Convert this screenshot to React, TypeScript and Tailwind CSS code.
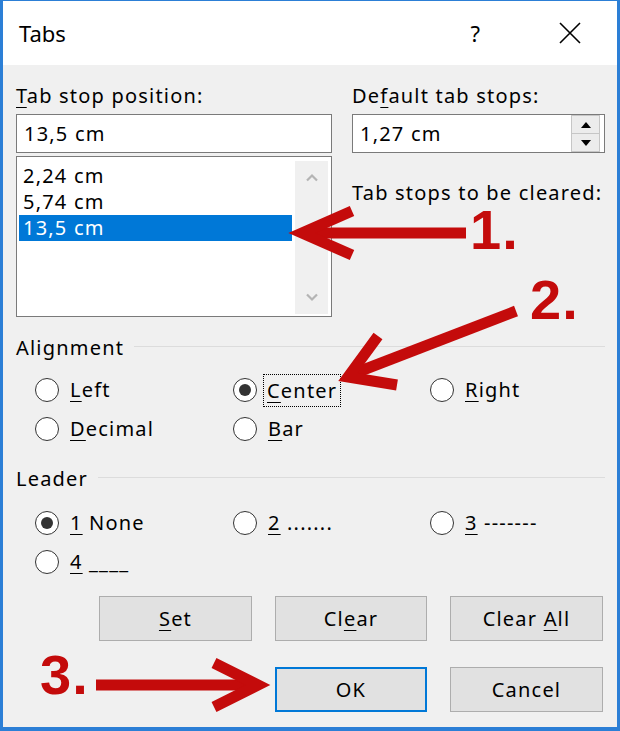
import React from 'react'

const U = ({ children }: { children: React.ReactNode }) => (
  <span className="underline decoration-1 underline-offset-[4px]">{children}</span>
)

const Radio = ({
  checked = false,
  focus = false,
  children,
}: {
  checked?: boolean
  focus?: boolean
  children: React.ReactNode
}) => (
  <div className="flex h-[26px] items-center gap-[11px]">
    <span className="flex h-6 w-6 shrink-0 items-center justify-center rounded-full border-[1.5px] border-[#333] bg-white">
      {checked && <span className="h-3 w-3 rounded-full bg-[#333]" />}
    </span>
    <span
      className={
        focus ? '-ml-[5px] block h-[33px] border border-dotted border-black px-[3px] pt-[3px]' : ''
      }
    >
      {children}
    </span>
  </div>
)

const Btn = ({ children, primary = false }: { children: React.ReactNode; primary?: boolean }) => (
  <button
    className={
      primary
        ? 'block h-[45px] w-full border-2 border-[#0078d7] bg-[#e1e1e1] text-center'
        : 'block h-[45px] w-full border border-[#adadad] bg-[#e1e1e1] text-center'
    }
  >
    {children}
  </button>
)

const GroupTitle = ({ children }: { children: React.ReactNode }) => (
  <div className="flex h-[26px] items-center gap-[10px]">
    <span>{children}</span>
    <span className="mt-[-3px] h-px flex-1 bg-[#dcdcdc]" />
  </div>
)

const Chevron = ({ up }: { up?: boolean }) => (
  <svg width="14" height="9" viewBox="0 0 14 9">
    <path
      d={up ? 'M2 7.5 L7 2.5 L12 7.5' : 'M2 1.5 L7 6.5 L12 1.5'}
      fill="none"
      stroke="#b4b4b4"
      strokeWidth="2.2"
    />
  </svg>
)

const Mark = ({ className, children }: { className: string; children: React.ReactNode }) => (
  <div
    className={`absolute text-[56px] font-bold leading-[40px] text-[#c40b0b] ${className}`}
    style={{ fontFamily: '"Liberation Sans", Arial, sans-serif' }}
  >
    {children}
  </div>
)

export default function App() {
  return (
    <div
      className="relative flex h-[731px] w-[620px] flex-col border-x-[3px] border-t border-b-4 border-[#2c7fd6] bg-[#f0f0f0] text-[20px] leading-[26px] tracking-[1.2px] text-black"
      style={{ fontFamily: '"Noto Sans", "Open Sans", sans-serif' }}
    >
      {/* title bar */}
      <div className="flex h-[64px] shrink-0 items-center bg-white pl-[16px] tracking-normal">
        <span className="text-[22px]">Tabs</span>
        <span className="ml-auto mr-[78px] text-[22px]">?</span>
        <svg width="24" height="24" viewBox="0 0 24 24" className="mr-[35px]">
          <path d="M2 2 L22 22 M22 2 L2 22" stroke="#000" strokeWidth="1.6" />
        </svg>
      </div>

      {/* body */}
      <div className="flex flex-col pl-[13px] pr-[12px] pt-[18px]">
        <div className="flex gap-[20px]">
          <div className="flex w-[316px] flex-col">
            <div>
              <U>T</U>ab stop position:
            </div>
            <div className="mt-[5px] flex h-[39px] items-center border border-[#7a7a7a] bg-white pl-[7px]">
              13,5 cm
            </div>
            <div className="mt-[3px] flex h-[161px] border border-[#7a7a7a] bg-white pb-[2px] pl-[2px] pr-[3px] pt-[4px]">
              <div className="flex w-[273px] flex-col pt-[2px]">
                <div className="h-[26px] pl-[4px]">2,24 cm</div>
                <div className="h-[26px] pl-[4px]">5,74 cm</div>
                <div className="h-[26px] bg-[#0078d7] pl-[4px] text-white">13,5 cm</div>
              </div>
              <div className="ml-[3px] flex w-[33px] flex-col items-center justify-between bg-[#f0f0f0] py-[12px]">
                <Chevron up />
                <Chevron />
              </div>
            </div>
          </div>

          <div className="flex w-[253px] flex-col">
            <div>
              De<U>f</U>ault tab stops:
            </div>
            <div className="mt-[5px] flex h-[39px] items-center border border-[#7a7a7a] bg-white pl-[7px]">
              <span className="flex-1">1,27 cm</span>
              <div className="mr-[4px] flex h-[37px] w-[29px] flex-col border border-[#c6c6c6] bg-[#ececec]">
                <div className="flex flex-1 items-center justify-center border-b border-[#c6c6c6]">
                  <svg width="10" height="6" viewBox="0 0 10 6">
                    <path d="M0 6 L5 0 L10 6 Z" fill="#000" />
                  </svg>
                </div>
                <div className="flex flex-1 items-center justify-center">
                  <svg width="10" height="6" viewBox="0 0 10 6">
                    <path d="M0 0 L5 6 L10 0 Z" fill="#000" />
                  </svg>
                </div>
              </div>
            </div>
            <div className="mt-[27px] whitespace-nowrap">Tab stops to be cleared:</div>
          </div>
        </div>

        {/* alignment */}
        <div className="mt-[18px]">
          <GroupTitle>Alignment</GroupTitle>
        </div>
        <div className="mt-[16px] grid grid-cols-[198px_197px_auto] gap-y-[13px] pl-[19px]">
          <Radio>
            <U>L</U>eft
          </Radio>
          <Radio checked focus>
            <U>C</U>enter
          </Radio>
          <Radio>
            <U>R</U>ight
          </Radio>
          <Radio>
            <U>D</U>ecimal
          </Radio>
          <Radio>
            <U>B</U>ar
          </Radio>
        </div>

        {/* leader */}
        <div className="mt-[24px]">
          <GroupTitle>Leader</GroupTitle>
        </div>
        <div className="mt-[18px] grid grid-cols-[198px_197px_auto] gap-y-[13px] pl-[19px]">
          <Radio checked>
            <U>1</U> None
          </Radio>
          <Radio>
            <U>2</U> .......
          </Radio>
          <Radio>
            <U>3</U> -------
          </Radio>
          <Radio>
            <U>4</U> ____
          </Radio>
        </div>

        {/* buttons */}
        <div className="ml-[83px] mt-[21px] grid grid-cols-[153px_152px_153px] gap-x-[23px] gap-y-[26px]">
          <Btn>
            <U>S</U>et
          </Btn>
          <Btn>
            Cl<U>e</U>ar
          </Btn>
          <Btn>
            Clear <U>A</U>ll
          </Btn>
          <div className="col-start-2">
            <Btn primary>OK</Btn>
          </div>
          <Btn>Cancel</Btn>
        </div>
      </div>

      {/* red annotations */}
      <svg
        className="pointer-events-none absolute left-[-3px] top-[-1px]"
        width="620"
        height="731"
        viewBox="0 0 620 731"
      >
        <g stroke="#c40b0b" strokeWidth="11" fill="none" strokeLinejoin="miter">
          <path d="M466 233 L306 233" />
          <path d="M352 211 L302 233 L352 255" />
          <path d="M516 311 L350 375" />
          <path d="M378 336 L348 377 L397 385" />
          <path d="M96 685 L250 685" />
          <path d="M214 663 L258 685 L214 707" />
        </g>
      </svg>
      <Mark className="left-[467px] top-[209px]">1.</Mark>
      <Mark className="left-[527px] top-[279px]">2.</Mark>
      <Mark className="left-[37px] top-[654px]">3.</Mark>
    </div>
  )
}
